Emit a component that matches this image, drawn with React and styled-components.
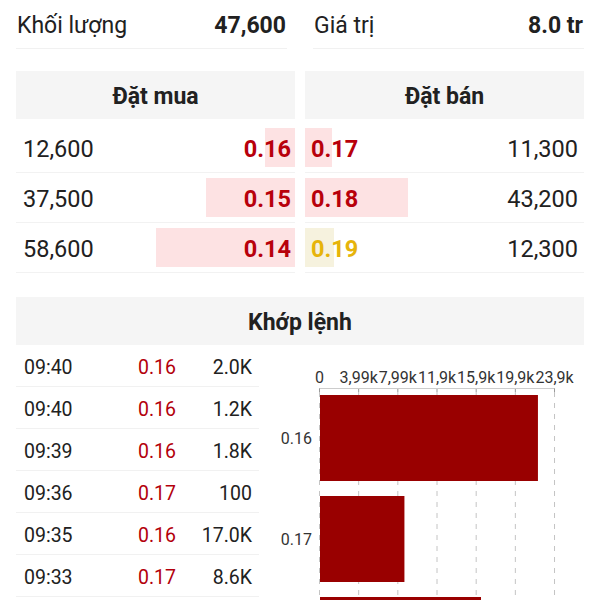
import React from 'react';
import styled, { createGlobalStyle } from 'styled-components';

const GlobalStyle = createGlobalStyle`
  body {
    margin: 0;
    background: #fff;
    color: #212121;
    font-family: Roboto, "Noto Sans", "Liberation Sans", sans-serif;
  }
`;

const Page = styled.div`
  padding: 0 16px;
  width: 568px;
  height: 600px;
  overflow: hidden;
`;

const SummaryRow = styled.div`
  display: grid;
  grid-template-columns: 1fr 1fr;
  column-gap: 26px;
`;

const SummaryCell = styled.div`
  display: flex;
  align-items: center;
  justify-content: space-between;
  height: 45px;
  padding: 3px 0 0 1px;
  border-bottom: 1px solid #f1f1f1;
  font-size: 23px;
`;

const SummaryValue = styled.span`
  font-weight: 700;
  padding-right: 1px;
`;

const Columns = styled.div`
  display: grid;
  grid-template-columns: ${(p) => (p.$single ? '1fr' : '1fr 1fr')};
  column-gap: 10px;
  margin-top: ${(p) => p.$top || 0}px;
`;

const HeaderBox = styled.div`
  display: flex;
  align-items: center;
  justify-content: center;
  height: 46px;
  padding-top: 2px;
  background: #f5f5f5;
  font-size: 23px;
  font-weight: 700;
`;

const BookRow = styled.div`
  display: flex;
  align-items: center;
  height: 39px;
  padding: 5px 0;
  border-bottom: 1px solid #f2f2f2;
  font-size: 23.5px;
`;

const Qty = styled.span`
  padding: ${(p) => (p.$side === 'buy' ? '3px 0 0 7px' : '3px 6px 0 0')};
  margin-left: ${(p) => (p.$side === 'buy' ? '0' : 'auto')};
`;

const Depth = styled.div`
  display: flex;
  align-items: center;
  justify-content: ${(p) => (p.$side === 'buy' ? 'flex-end' : 'flex-start')};
  height: 39px;
  margin-left: ${(p) => (p.$side === 'buy' ? 'auto' : '0')};
  background: ${(p) => (p.$tone === 'ref' ? '#f6f2de' : '#fde2e3')};
`;

const Price = styled.span`
  white-space: nowrap;
  font-weight: 700;
  color: ${(p) => (p.$tone === 'ref' ? '#e6b40b' : '#b8000b')};
  padding: ${(p) => (p.$side === 'buy' ? '3px 4px 0 0' : '3px 0 0 6px')};
`;

const MatchArea = styled.div`
  display: grid;
  grid-template-columns: 243px 1fr;
  column-gap: 11px;
`;

const TradeRow = styled.div`
  display: grid;
  grid-template-columns: 82px 70px 76px;
  align-items: center;
  height: 38px;
  padding: 3px 7px 0 8px;
  border-bottom: 1px solid #f1f1f1;
  font-size: 19.5px;
`;

const TradeCell = styled.span`
  text-align: ${(p) => (p.$right ? 'right' : 'left')};
  color: ${(p) => (p.$red ? '#b3000c' : 'inherit')};
`;

const ChartSvg = styled.svg`
  display: block;
  font-family: Roboto, "Noto Sans", sans-serif;
`;

const summary = [
  { label: 'Khối lượng', value: '47,600' },
  { label: 'Giá trị', value: '8.0 tr' },
];

const bids = [
  { qty: 12600, price: '0.16' },
  { qty: 37500, price: '0.15' },
  { qty: 58600, price: '0.14' },
];

const asks = [
  { qty: 11300, price: '0.17' },
  { qty: 43200, price: '0.18' },
  { qty: 12300, price: '0.19', tone: 'ref' },
];

const trades = [
  ['09:40', '0.16', '2.0K'],
  ['09:40', '0.16', '1.2K'],
  ['09:39', '0.16', '1.8K'],
  ['09:36', '0.17', '100'],
  ['09:35', '0.16', '17.0K'],
  ['09:33', '0.17', '8.6K'],
];

const bars = [
  { label: '0.16', vol: 22200 },
  { label: '0.17', vol: 8600 },
  { label: '0.18', vol: 16400 },
];

const maxQty = Math.max(...bids.map((b) => b.qty), ...asks.map((a) => a.qty));
const fmt = (n) => n.toLocaleString('en-US');

const ticks = ['0', '3,99k', '7,99k', '11,9k', '15,9k', '19,9k', '23,9k'];
const step = 39.17;
const x0 = 49.5;

function VolumeChart() {
  return (
    <ChartSvg width="320" height="255" viewBox="0 0 320 255">
      {ticks.map((t, i) => {
        const x = x0 + i * step;
        return (
          <g key={t}>
            <text x={x} y="38" fontSize="16" fill="#333" textAnchor="middle">{t}</text>
            <line x1={x} y1="43" x2={x} y2="47" stroke="#999" strokeWidth="1" />
            <line x1={x} y1="47" x2={x} y2="255" stroke="#c4c4c4" strokeWidth="1" strokeDasharray="5 6" />
          </g>
        );
      })}
      <line x1={x0} y1="43.5" x2={x0 + 6 * step} y2="43.5" stroke="#ccc" strokeWidth="1" />
      {bars.map((b, i) => {
        const y = 50 + i * 101;
        const w = (b.vol / 3990) * step;
        return (
          <g key={b.label}>
            <rect x={x0 + 0.5} y={y} width={w} height="86" fill="#990000" />
            <text x="42" y={y + 49} fontSize="16" fill="#333" textAnchor="end">{b.label}</text>
          </g>
        );
      })}
    </ChartSvg>
  );
}

export default function App() {
  return (
    <Page>
      <GlobalStyle />
      <SummaryRow>
        {summary.map((s) => (
          <SummaryCell key={s.label}>
            <span>{s.label}</span>
            <SummaryValue>{s.value}</SummaryValue>
          </SummaryCell>
        ))}
      </SummaryRow>

      <Columns $top={22}>
        <HeaderBox>Đặt mua</HeaderBox>
        <HeaderBox>Đặt bán</HeaderBox>
      </Columns>

      <Columns $top={4}>
        <div>
          {bids.map((b) => (
            <BookRow key={b.price}>
              <Qty $side="buy">{fmt(b.qty)}</Qty>
              <Depth $side="buy" style={{ width: `${(b.qty / maxQty) * 50}%` }}>
                <Price $side="buy">{b.price}</Price>
              </Depth>
            </BookRow>
          ))}
        </div>
        <div>
          {asks.map((a) => (
            <BookRow key={a.price}>
              <Depth $side="sell" $tone={a.tone} style={{ width: `${(a.qty / maxQty) * 50}%` }}>
                <Price $side="sell" $tone={a.tone}>{a.price}</Price>
              </Depth>
              <Qty $side="sell">{fmt(a.qty)}</Qty>
            </BookRow>
          ))}
        </div>
      </Columns>

      <Columns $top={24} $single>
        <HeaderBox>Khớp lệnh</HeaderBox>
      </Columns>

      <MatchArea>
        <div>
          {trades.map((t, i) => (
            <TradeRow key={i}>
              <TradeCell>{t[0]}</TradeCell>
              <TradeCell $right $red>{t[1]}</TradeCell>
              <TradeCell $right>{t[2]}</TradeCell>
            </TradeRow>
          ))}
        </div>
        <VolumeChart />
      </MatchArea>
    </Page>
  );
}
